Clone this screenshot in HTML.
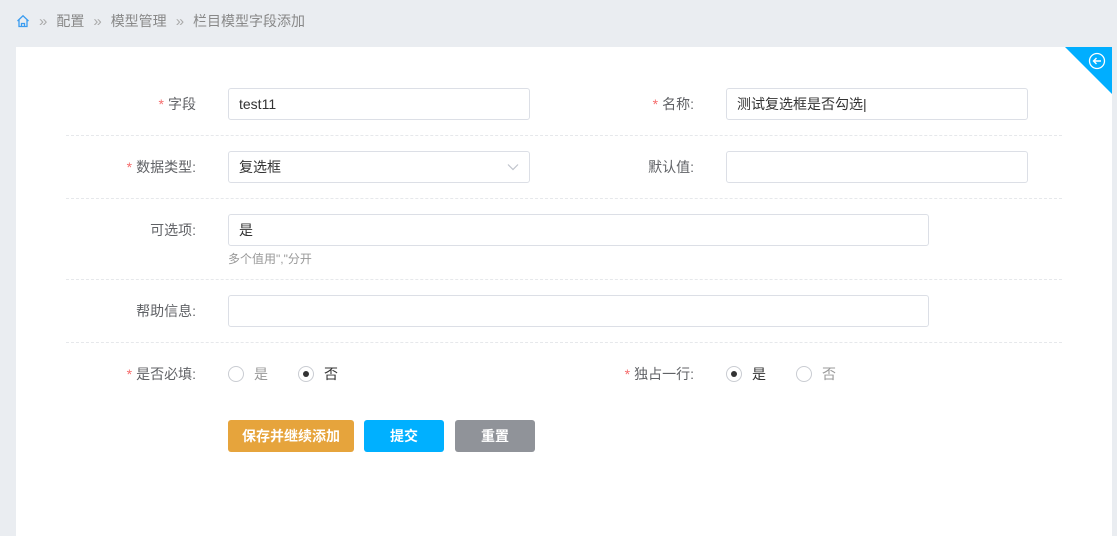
<!DOCTYPE html>
<html><head><meta charset="utf-8"><style>
*{box-sizing:border-box;margin:0;padding:0}
body{width:1117px;height:536px;background:#eaedf1;font-family:"Liberation Sans","Noto Sans CJK SC",sans-serif;font-size:14px;color:#606266;position:relative;overflow:hidden}
.bc{position:absolute;left:16px;top:12px;font-size:14px;color:#888;display:flex;align-items:center;height:18px}
.bc .s{margin:0 9px;color:#aaa;font-size:15px}
.card{position:absolute;left:16px;top:47px;width:1096px;height:489px;background:#fff;overflow:hidden}
.corner{position:absolute;right:0;top:0;width:0;height:0;border-top:47px solid #00aeff;border-left:47px solid transparent}
.lbl{position:absolute;text-align:right;width:200px;font-size:14px;color:#606266;line-height:32px}
.lbl i{color:#f56c6c;font-style:normal;margin-right:4px}
.inp{position:absolute;height:32px;border:1px solid #dcdfe6;border-radius:3px;padding-left:10px;line-height:30px;color:#333;font-size:14px}
.line{position:absolute;left:50px;width:996px;border-top:1px dashed #e6e8eb}
.hint{position:absolute;font-size:12px;color:#999}
.radio{position:absolute;display:flex;align-items:center;font-size:14px;line-height:20px}
.radio span.c{width:16px;height:16px;border:1px solid #c9ccd2;border-radius:50%;margin-right:10px;position:relative}
.radio span.c.on::after{content:"";position:absolute;left:4px;top:4px;width:6px;height:6px;border-radius:50%;background:#333}
.btn{position:absolute;top:373px;height:32px;border-radius:3px;color:#fff;font-size:14px;font-weight:bold;text-align:center;line-height:32px}
</style></head><body>
<div class="bc"><svg width="14" height="14" viewBox="0 0 14 14"><path d="M1.5 7 L7 1.8 L12.5 7 M3 6 V12.5 H11 V6 M5.5 12.5 V9.5 H8.5 V12.5" fill="none" stroke="#3a9cf0" stroke-width="1.3"/></svg><span class="s">»</span>配置<span class="s">»</span>模型管理<span class="s">»</span>栏目模型字段添加</div>
<div class="card">
<div class="corner"></div>
<svg style="position:absolute;right:6px;top:5px" width="18" height="18" viewBox="0 0 18 18"><circle cx="9" cy="9" r="7.5" fill="none" stroke="#fff" stroke-width="1.3"/><path d="M13 9H5.5M8.5 6L5.5 9L8.5 12" fill="none" stroke="#fff" stroke-width="1.4"/></svg>

<div class="lbl" style="left:-20px;top:41px"><i>*</i>字段</div>
<div class="inp" style="left:212px;top:41px;width:302px">test11</div>
<div class="lbl" style="left:478px;top:41px"><i>*</i>名称:</div>
<div class="inp" style="left:710px;top:41px;width:302px">测试复选框是否勾选|</div>
<div class="line" style="top:88px"></div>

<div class="lbl" style="left:-20px;top:104px"><i>*</i>数据类型:</div>
<div class="inp" style="left:212px;top:104px;width:302px">复选框<svg style="position:absolute;right:10px;top:11px" width="12" height="8" viewBox="0 0 12 8"><path d="M1 1.5L6 6.5L11 1.5" fill="none" stroke="#c0c4cc" stroke-width="1.2"/></svg></div>
<div class="lbl" style="left:478px;top:104px">默认值:</div>
<div class="inp" style="left:710px;top:104px;width:302px"></div>
<div class="line" style="top:151px"></div>

<div class="lbl" style="left:-20px;top:167px">可选项:</div>
<div class="inp" style="left:212px;top:167px;width:701px">是</div>
<div class="hint" style="left:212px;top:203px">多个值用","分开</div>
<div class="line" style="top:232px"></div>

<div class="lbl" style="left:-20px;top:248px">帮助信息:</div>
<div class="inp" style="left:212px;top:248px;width:701px"></div>
<div class="line" style="top:295px"></div>

<div class="lbl" style="left:-20px;top:311px"><i>*</i>是否必填:</div>
<div class="radio" style="left:212px;top:317px;color:#999"><span class="c"></span>是</div>
<div class="radio" style="left:282px;top:317px;color:#333"><span class="c on"></span>否</div>
<div class="lbl" style="left:478px;top:311px"><i>*</i>独占一行:</div>
<div class="radio" style="left:710px;top:317px;color:#333"><span class="c on"></span>是</div>
<div class="radio" style="left:780px;top:317px;color:#999"><span class="c"></span>否</div>

<div class="btn" style="left:212px;width:126px;background:#e6a43c">保存并继续添加</div>
<div class="btn" style="left:348px;width:80px;background:#00b0ff">提交</div>
<div class="btn" style="left:439px;width:80px;background:#909399">重置</div>
</div>
</body></html>
